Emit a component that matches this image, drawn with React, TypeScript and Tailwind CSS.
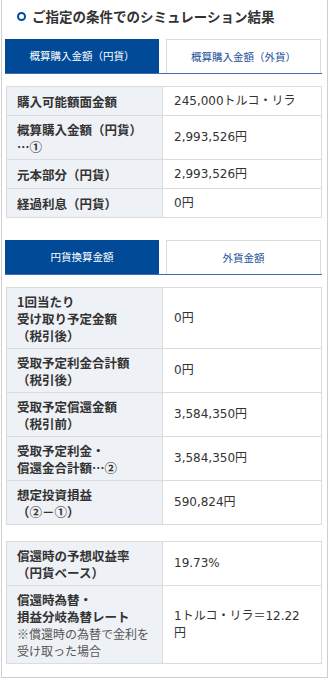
import type {ReactNode} from 'react';

const font = {fontFamily: '"Noto Sans CJK JP", "Noto Sans", sans-serif'};
const valueFont = {fontFamily: '"DejaVu Sans", "Noto Sans CJK JP", sans-serif'};

type Row = {label: ReactNode; value: ReactNode};

const purchaseRows: Row[] = [
  {label: '購入可能額面金額', value: '245,000トルコ・リラ'},
  {
    label: (
      <>
        概算購入金額（円貨）
        <br />
        …①
      </>
    ),
    value: '2,993,526円',
  },
  {label: '元本部分（円貨）', value: '2,993,526円'},
  {label: '経過利息（円貨）', value: '0円'},
];

const receiveRows: Row[] = [
  {
    label: (
      <>
        1回当たり
        <br />
        受け取り予定金額
        <br />
        （税引後）
      </>
    ),
    value: '0円',
  },
  {
    label: (
      <>
        受取予定利金合計額
        <br />
        （税引後）
      </>
    ),
    value: '0円',
  },
  {
    label: (
      <>
        受取予定償還金額
        <br />
        （税引前）
      </>
    ),
    value: '3,584,350円',
  },
  {
    label: (
      <>
        受取予定利金・
        <br />
        償還金合計額…②
      </>
    ),
    value: '3,584,350円',
  },
  {
    label: (
      <>
        想定投資損益
        <br />
        （②－①）
      </>
    ),
    value: '590,824円',
  },
];

const rateRows: Row[] = [
  {
    label: (
      <>
        償還時の予想収益率
        <br />
        （円貨ベース）
      </>
    ),
    value: '19.73%',
  },
  {
    label: (
      <>
        償還時為替・
        <br />
        損益分岐為替レート
        <br />
        <span className="text-[12px] font-normal text-[#555]">
          ※償還時の為替で金利を
          <br />
          受け取った場合
        </span>
      </>
    ),
    value: (
      <>
        1トルコ・リラ＝12.22
        <br />円
      </>
    ),
  },
];

const Tabs = ({active, other}: {active: string; other: string}) => (
  <div className="flex h-[35px] border-b-[1.5px] border-[#3d6fb6] pr-[1px]">
    <div className="flex w-[154px] items-center justify-center bg-[#004a98] text-[10.5px] text-white">
      {active}
    </div>
    <div className="ml-[7px] flex flex-1 items-center justify-center border border-b-0 border-[#dcdcdc] bg-white text-[10.5px] text-[#1d4f9b]">
      {other}
    </div>
  </div>
);

const Table = ({rows}: {rows: Row[]}) => (
  <div className="ml-[1px] border-l border-t border-[#dcdcdc]">
    {rows.map((row, i) => (
      <div key={i} className="flex min-h-[29px] border-b border-[#dcdcdc]">
        <div className="flex w-[156px] items-center border-r border-[#dcdcdc] bg-[#eef1f5] px-[10px] py-[4.5px] text-[12.5px] font-bold leading-[17px] text-[#333]">
          <div>{row.label}</div>
        </div>
        <div
          className="flex flex-1 items-center border-r border-[#dcdcdc] bg-white py-[4.5px] pl-[11px] pr-[6px] text-[12px] leading-[17px] text-[#333]"
          style={valueFont}
        >
          <div>{row.value}</div>
        </div>
      </div>
    ))}
  </div>
);

export default function App() {
  return (
    <div className="bg-white" style={font}>
      <div className="ml-[1px] w-[327px] border-x border-b border-[#cfcfcf] pb-[13px] pl-[3px] pr-[5px]">
        <div className="flex h-[39px] items-center pb-[7px] pl-[12px]">
          <span className="mr-[6px] box-border h-[9px] w-[9px] rounded-full border-[2.5px] border-[#004a98]" />
          <h2 className="text-[13.5px] font-bold text-[#333]">
            ご指定の条件でのシミュレーション結果
          </h2>
        </div>
        <Tabs active="概算購入金額（円貨）" other="概算購入金額（外貨）" />
        <div className="mt-[12px]">
          <Table rows={purchaseRows} />
        </div>
        <div className="mt-[22px]">
          <Tabs active="円貨換算金額" other="外貨金額" />
        </div>
        <div className="mt-[12px]">
          <Table rows={receiveRows} />
        </div>
        <div className="mt-[16px]">
          <Table rows={rateRows} />
        </div>
      </div>
    </div>
  );
}
